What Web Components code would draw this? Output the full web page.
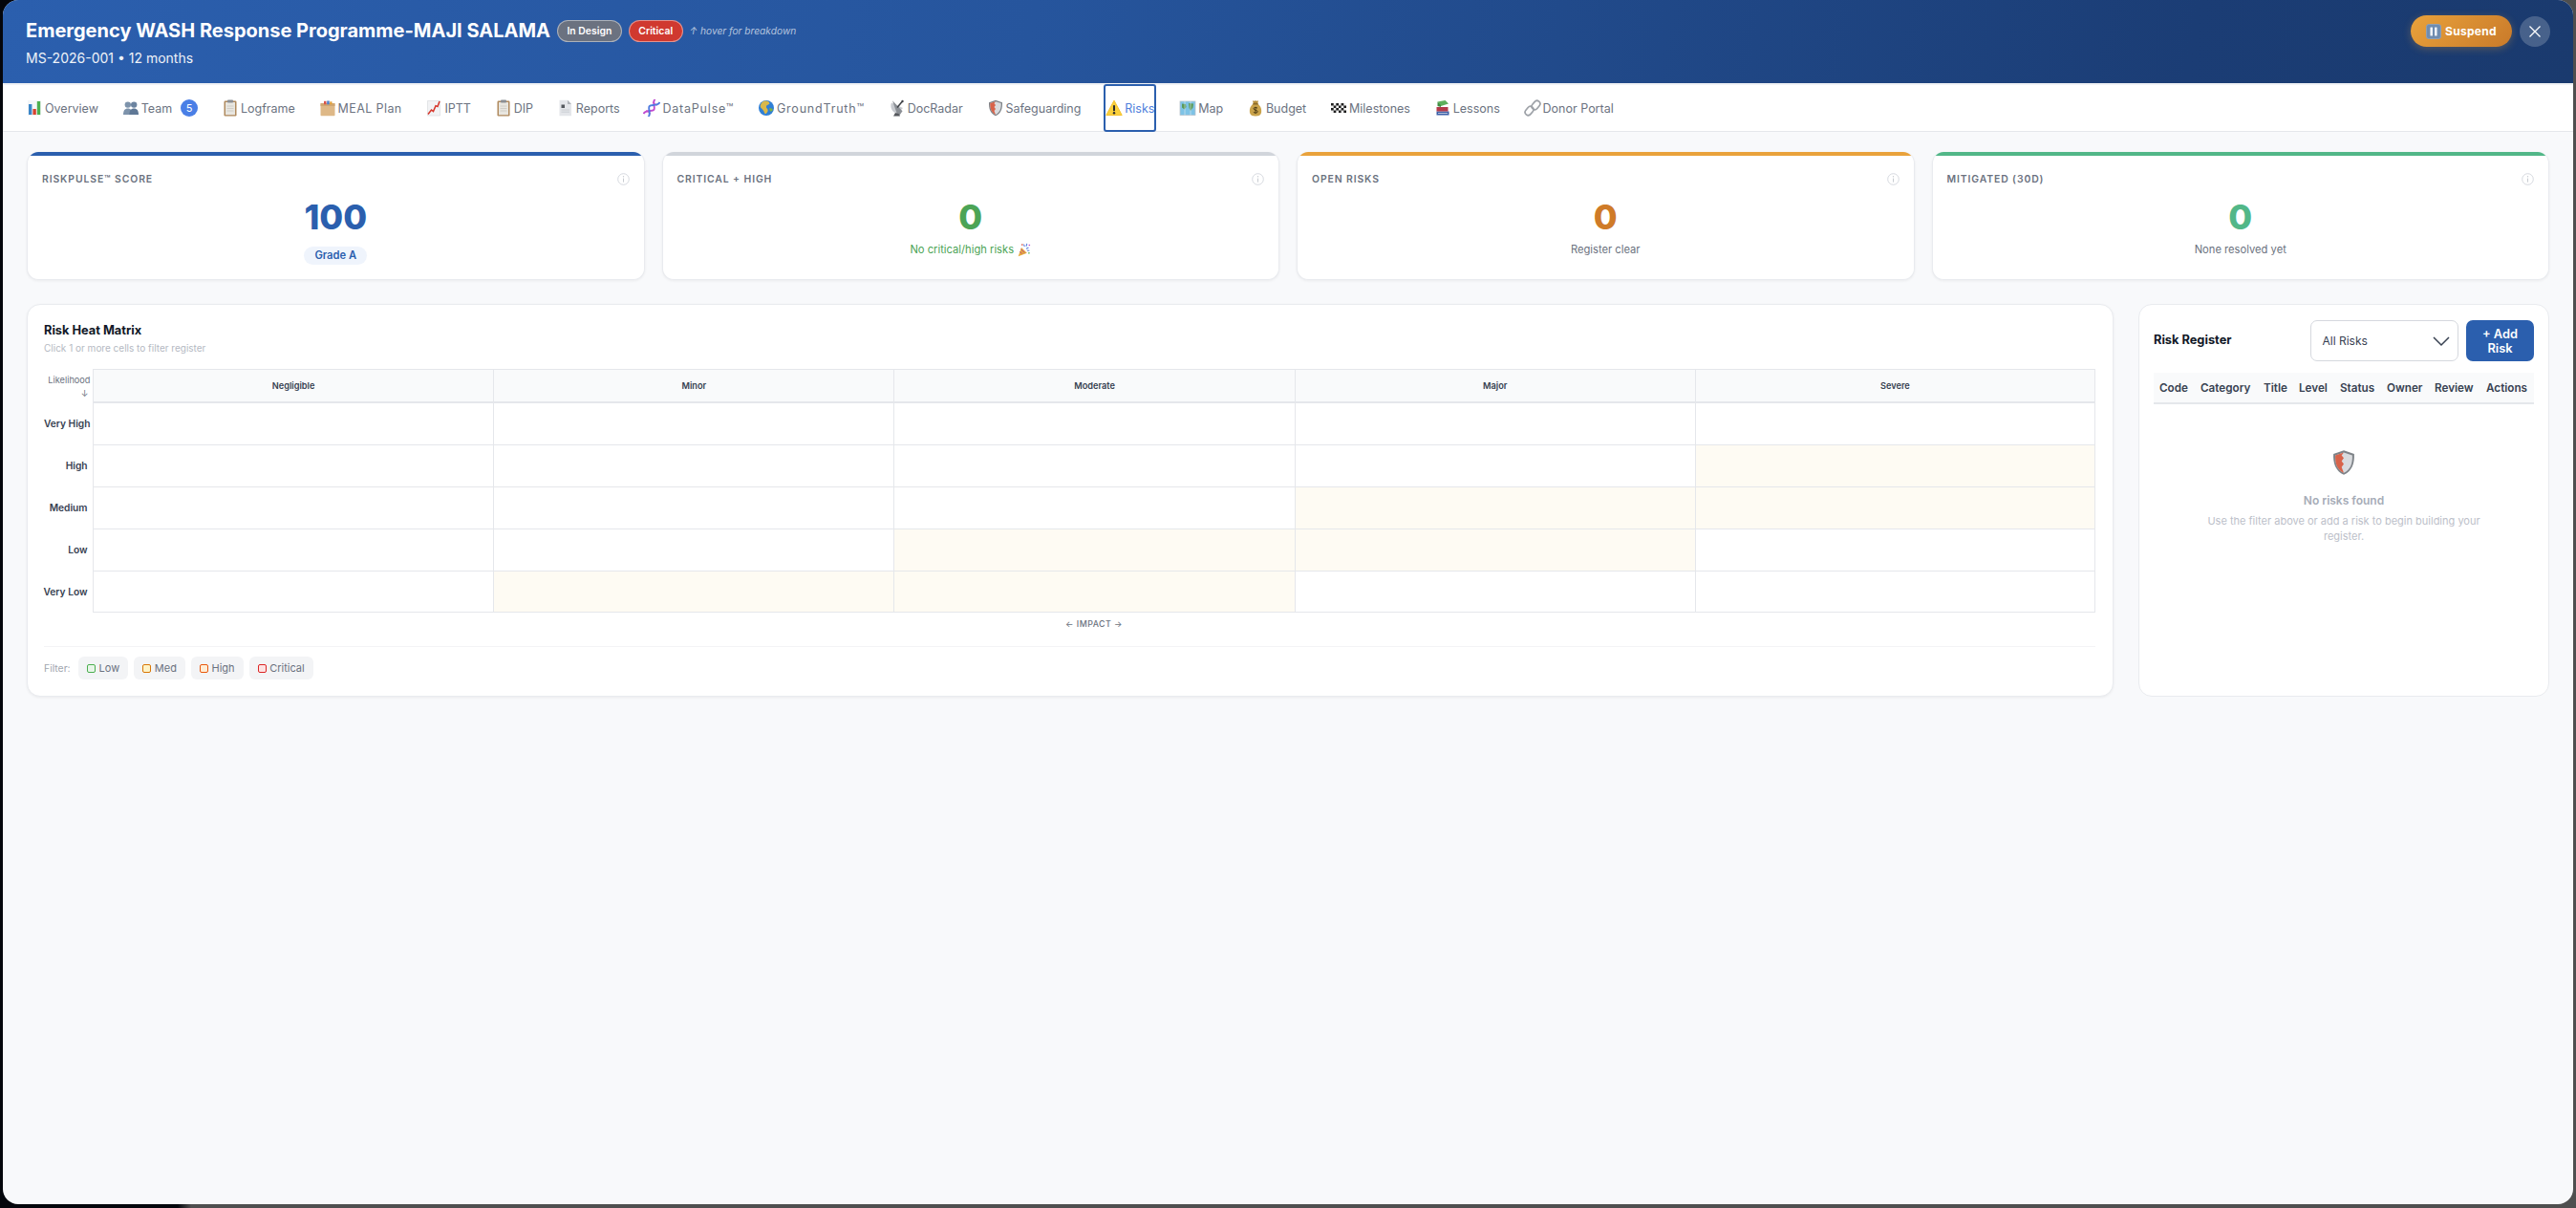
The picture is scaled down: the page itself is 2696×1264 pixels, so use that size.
<!DOCTYPE html>
<html lang="en">
<head>
<meta charset="utf-8">
<title>Risks</title>
<style>
  html,body{margin:0;height:100%}
  body{box-sizing:border-box;padding:0 3px 4px 3px;background:linear-gradient(90deg,#04060c 0,#04060c 186px,#4f4f4f 200px,#4f4f4f 100%);font-family:Inter,"Liberation Sans",sans-serif;overflow:hidden}
</style>
</head>
<body>
<ms-modal>
  <ms-header slot="header" title-text="Emergency WASH Response Programme-MAJI SALAMA" sub="MS-2026-001 • 12 months"></ms-header>
  <ms-tabs slot="tabs">
    <ms-tab icon="chart">Overview</ms-tab>
    <ms-tab icon="team" badge="5">Team</ms-tab>
    <ms-tab icon="clip">Logframe</ms-tab>
    <ms-tab icon="box" style="letter-spacing:.4px">MEAL Plan</ms-tab>
    <ms-tab icon="trend">IPTT</ms-tab>
    <ms-tab icon="clip">DIP</ms-tab>
    <ms-tab icon="doc">Reports</ms-tab>
    <ms-tab icon="dna" style="letter-spacing:.8px">DataPulse™</ms-tab>
    <ms-tab icon="globe" style="letter-spacing:.8px">GroundTruth™</ms-tab>
    <ms-tab icon="dish">DocRadar</ms-tab>
    <ms-tab icon="shield">Safeguarding</ms-tab>
    <ms-tab icon="warn" active>Risks</ms-tab>
    <ms-tab icon="map">Map</ms-tab>
    <ms-tab icon="bag">Budget</ms-tab>
    <ms-tab icon="flag">Milestones</ms-tab>
    <ms-tab icon="books">Lessons</ms-tab>
    <ms-tab icon="link">Donor Portal</ms-tab>
  </ms-tabs>
  <ms-kpi-row>
    <ms-kpi label="RISKPULSE™ SCORE" value="100" bar="#2b5fae" tone="#2b5fae" pill="Grade A"></ms-kpi>
    <ms-kpi label="CRITICAL + HIGH" value="0" bar="#d1d5db" tone="#4ca456" sub="No critical/high risks" subcolor="#4ca456" subicon="party"></ms-kpi>
    <ms-kpi label="OPEN RISKS" value="0" bar="#e9a23b" tone="#cf7b28" sub="Register clear"></ms-kpi>
    <ms-kpi label="MITIGATED (30D)" value="0" bar="#52b788" tone="#52b788" sub="None resolved yet"></ms-kpi>
  </ms-kpi-row>
  <ms-panels>
    <ms-matrix></ms-matrix>
    <ms-register slot="side"></ms-register>
  </ms-panels>
</ms-modal>

<script>
const ICONS = {
  chart:`<rect x="2" y="1" width="14" height="16" fill="#f4f6f8"/><rect x="3" y="5" width="3.4" height="11" fill="#3a86c8"/><rect x="7.4" y="10" width="3.4" height="6" fill="#d8432f"/><rect x="11.8" y="2" width="3.4" height="14" fill="#4caf50"/>`,
  team:`<circle cx="5.8" cy="5.6" r="3.2" fill="#7d93ab"/><circle cx="12.2" cy="5.6" r="3.2" fill="#6c84a0"/><path d="M1 16c0-4.5 1.6-6.6 4.8-6.6s4.800 2.100 4.800 6.600z" fill="#7d93ab"/><path d="M7.400 16c0-4.500 1.600-6.600 4.800-6.600S17 11.500 17 16z" fill="#5f7896"/>`,
  clip:`<rect x="2.500" y="1.500" width="13" height="16" rx="1.200" fill="#b08a5e"/><rect x="4" y="3" width="10" height="13.200" fill="#e8e6e0"/><rect x="6" y=".5" width="6" height="3" rx=".8" fill="#8c8f94"/><path d="M5.500 7h7M5.500 9.500h7M5.500 12h7" stroke="#c9c7c0" stroke-width=".8"/>`,
  box:`<path d="M1.500 4.500h15v12a.8.8 0 0 1-.8.8H2.300a.8.8 0 0 1-.8-.8z" fill="#deb887"/><rect x="1.500" y="4" width="15" height="3" fill="#cfa672"/><rect x="5" y="1.800" width="2.500" height="3.500" fill="#d8534a"/><rect x="8.200" y="1.500" width="2.500" height="3.800" fill="#4a7fc8"/><rect x="11.200" y="2.300" width="2.300" height="3" fill="#e2a13c"/>`,
  trend:`<path d="M2.500 1.500h13v15.500h-13z" fill="#f2f3f5" stroke="#d3d6da" stroke-width=".6"/><path d="M3 15.500l3.500-4.500 2 1.600 2.500-6 2 .8 2-5.400" fill="none" stroke="#d6352a" stroke-width="1.500"/>`,
  doc:`<path d="M2.500 .8h8.500l4 4.200v12.200H2.500z" fill="#e4e6ea"/><path d="M11 .8v4.200h4z" fill="#aeb2b8"/><rect x="4.500" y="5.500" width="3.500" height="3.500" fill="#55595f"/><path d="M4.500 11h8.500M4.500 13.200h8.500" stroke="#c3c6cb" stroke-width=".8"/>`,
  dna:`<g transform="rotate(38 9 9)" fill="none" stroke-width="1.900"><path d="M6 3.500h6M6 14.500h6" stroke="#e07ab8" stroke-width="1.200"/><path d="M6 -1C5 4 12 6 12 9s-7 5-6 10" stroke="#c04bd0"/><path d="M12 -1C13 4 6 6 6 9s7 5 6 10" stroke="#4f7be0"/></g>`,
  globe:`<circle cx="9" cy="9" r="8" fill="#2f7fd6"/><path d="M6 2c3-1 6 0 6.500 2.200-1 2-3 1-3.500 3.200-.5 2 2.500 2.500 1.500 5-1 2.500-3 3.500-3.500 1.500S5 10.500 3.500 9 2.800 4 6 2z" fill="#d9b84a"/><path d="M12 9.500c1.500-.5 3.500 0 3.800 1.500-.5 1.500-2.500 2-3 1z" fill="#7cb342"/>`,
  dish:`<path d="M3 3.500c-1.800 5 .5 10 6 11.500l6-6z" fill="#c8cbd0"/><path d="M4 1.200l10.500 11-3.500 5-2.500-3z" fill="#8b8f95"/><path d="M9 8.500l5-6" stroke="#3f4247" stroke-width="1.500"/><circle cx="14.500" cy="2" r="1.200" fill="#3f4247"/><path d="M7 14l-2 3.500h7l-1.500-2.500z" fill="#55585d"/>`,
  shield:`<path d="M9 .8l7 2.400c.3 6.500-1.500 11.500-7 14-5.500-2.500-7.300-7.500-7-14z" fill="#7e8388"/><path d="M9 2.200l5.700 1.900c.2 5.500-1.200 9.700-5.700 11.800-4.500-2.100-5.900-6.300-5.700-11.800z" fill="#d9dbde"/><path d="M3.300 4.100L9 2.200l-1.500 2L9 6 7.500 8 9 10l-1.500 2L9 15.900c-4.500-2.100-5.900-6.300-5.700-11.800z" fill="#d8634a"/>`,
  warn:`<path d="M9 1.200L17.200 16.500H.8z" fill="#fbd13d" stroke="#f5c22e" stroke-linejoin="round"/><rect x="8" y="6" width="2" height="6.300" rx=".8" fill="#2b2b2b"/><circle cx="9" cy="14.200" r="1.200" fill="#2b2b2b"/>`,
  map:`<rect x="1" y="2" width="16" height="14.500" fill="#7ec3e6"/><rect x="1" y="2" width="16" height="14.500" fill="none" stroke="#b9c4cc" stroke-width=".8"/><path d="M3 4.500l4 .5.500 3-2 2.500-2.500-2zM10 4l5 .5-.500 4-2.500 3.500-1.500-3z" fill="#5c9a58"/><path d="M6 2v14.500M12 2v14.500" stroke="#dfeaf1" stroke-width=".6"/>`,
  bag:`<path d="M6.500 4.800C3 7.500 2.500 11 3 14c.5 2.500 2.500 3.500 6 3.500s5.500-1 6-3.500c.5-3-.000-6.500-3.500-9.200z" fill="#c9a24a"/><path d="M6 1.200c1 .6 2 .6 3 0 1 .6 2 .6 3 0l-.800 3.600H6.800z" fill="#b58d3a"/><rect x="6.300" y="4.200" width="5.400" height="1.200" fill="#7a5b1e"/><path d="M11 9.200c-.8-1-4-1.200-4 .6 0 1.800 4.200 1 4.200 3 0 1.700-3.300 1.600-4.400.5M9 7.800v7" fill="none" stroke="#4b3a12" stroke-width="1"/>`,
  flag:`<rect x="1" y="4" width="16" height="10" fill="#f3f3f3"/><path d="M1 4h2.700v2.500H1zM6.300 4H9v2.500H6.300zM11.600 4h2.700v2.500h-2.700zM3.700 6.500h2.600V9H3.700zM9 6.500h2.600V9H9zM14.300 6.500H17V9h-2.700zM1 9h2.700v2.500H1zM6.300 9H9v2.500H6.300zM11.600 9h2.700v2.500h-2.700zM3.700 11.500h2.600V14H3.700zM9 11.500h2.600V14H9zM14.300 11.500H17V14h-2.700z" fill="#1f1f1f"/>`,
  books:`<rect x="2.500" y="12.500" width="13" height="4" fill="#3b5fa8"/><rect x="2.500" y="8" width="12" height="4.500" fill="#b33a4a"/><path d="M3.500 2.500l8-1.500 3.500 3.500-8 2.500z" fill="#5db05c"/><path d="M3.500 2.500V7l3.500 1V6z" fill="#3f8c42"/><path d="M4 14.500h10" stroke="#d8dde8" stroke-width=".8"/>`,
  link:`<g fill="none" stroke="#9ea2a8" stroke-width="1.700"><rect x="9.200" y="1" width="6.500" height="10" rx="3.250" transform="rotate(40 12.400 6)"/><rect x="2.300" y="7" width="6.500" height="10" rx="3.250" transform="rotate(40 5.600 12)"/></g>`,
  party:`<path d="M2 17l4-11 7 7z" fill="#e5a93c"/><path d="M4 11l3 3M5.500 8l4.500 4.500" stroke="#c0508a" stroke-width="1.200"/><path d="M9 2l1 3M13 1l-1 3.500M15 6l-3 1.500M16 10l-3-.5" stroke="#5a7fe0" stroke-width="1.300"/><circle cx="7" cy="2.500" r="1" fill="#d8432f"/><circle cx="16" cy="3" r="1" fill="#c04bd0"/><circle cx="15.500" cy="13" r="1" fill="#4caf50"/>`,
  pause:`<rect x=".5" y=".5" width="17" height="17" rx="3" fill="#6f8cb0"/><rect x=".5" y=".5" width="17" height="17" rx="3" fill="none" stroke="#8aa3c2"/><rect x="5" y="4" width="2.800" height="10" rx=".6" fill="#f3f6fa"/><rect x="10.200" y="4" width="2.800" height="10" rx=".6" fill="#f3f6fa"/>`
};
function def(name, css, html){
  customElements.define(name, class extends HTMLElement{
    constructor(){super();this.attachShadow({mode:'open'});}
    connectedCallback(){
      this.shadowRoot.innerHTML = `<style>${css}</style>` + (typeof html==='function'?html(this):html);
    }
  });
}
def('ms-icon', `:host{display:inline-block;line-height:0;flex:none}svg{display:block;width:100%;height:100%}`,
  el=>`<svg viewBox="0 0 18 18" xmlns="http://www.w3.org/2000/svg" aria-hidden="true">${ICONS[el.getAttribute('name')]||''}</svg>`);

def('ms-modal', `
  :host{display:flex;flex-direction:column;height:100%;width:2690px;background:#f8f9fb;border-radius:16px;overflow:hidden}
  .body{flex:1;display:flex;flex-direction:column;gap:25px;padding:21px 25px 0}
`, `<slot name="header"></slot><slot name="tabs"></slot><div class="body"><slot></slot></div>`);

def('ms-header', `
  :host{display:flex;justify-content:space-between;align-items:flex-start;height:87px;box-sizing:border-box;padding:16px 24px 0 24px;background:linear-gradient(100deg,#2b5fae 0%,#26559d 40%,#1b3d75 85%,#1a3a6e 100%);color:#fff;flex:none}
  .top{display:flex;align-items:center;height:32px}
  h1{margin:0;font-size:20px;font-weight:700;line-height:32px;white-space:nowrap}
  .badge{display:inline-flex;align-items:center;height:23px;box-sizing:border-box;border-radius:12px;border:1px solid rgba(255,255,255,.45);font-size:10.400px;font-weight:600;padding:0 9.500px;margin-left:7px}
  .red{background:#d0392f}
  .gray{background:#6b7280}
  .hint{font-size:10.200px;font-style:italic;color:rgba(255,255,255,.65);margin-left:7px;white-space:nowrap}
  .sub{font-size:14px;line-height:20px;margin-top:3px;opacity:.92}
  .right{display:flex;align-items:center;gap:8px}
  .sus{display:flex;align-items:center;gap:4px;height:33px;width:106px;box-sizing:border-box;padding-left:16px;border-radius:17px;background:linear-gradient(135deg,#e9a23b,#c97a2a);font-size:12px;font-weight:700;letter-spacing:.3px;box-shadow:0 2px 8px rgba(233,162,59,.3)}
  .sus ms-icon{width:16px;height:16px}
  .x{width:32px;height:32px;border-radius:50%;background:rgba(255,255,255,.2);display:flex;align-items:center;justify-content:center;margin-top:1px}
`, el=>`<div><div class="top"><h1>${el.getAttribute('title-text')}</h1><span class="badge gray">In Design</span><span class="badge red">Critical</span><span class="hint">↑ hover for breakdown</span></div><div class="sub">${el.getAttribute('sub')}</div></div>
<div class="right"><div class="sus"><ms-icon name="pause"></ms-icon><span>Suspend</span></div><div class="x"><svg width="14" height="14" viewBox="0 0 14 14"><path d="M1.500 1.500l11 11M12.500 1.500l-11 11" stroke="#fff" stroke-width="1.300" fill="none"/></svg></div></div>`);

def('ms-tabs', `
  :host{display:flex;flex:none;gap:24.800px;height:48px;padding:0 24px;background:#fff;border-top:2px solid #f0f2f5;border-bottom:1px solid #e5e7eb;align-items:stretch}
`, `<slot></slot>`);

def('ms-tab', `
  :host{display:flex;align-items:center;gap:2px;font-size:12.500px;color:#6b7280;white-space:nowrap;box-sizing:border-box;position:relative}
  :host([active]){color:#4f80dc;outline:2px solid #2b5fae;outline-offset:-1px;border-radius:2px;padding:0 1px}
  ms-icon{width:18px;height:18px}
  .b{display:inline-flex;width:18px;height:18px;border-radius:50%;background:#4a7fe6;color:#fff;font-size:11px;align-items:center;justify-content:center;margin-left:7px}
`, el=>`<ms-icon name="${el.getAttribute('icon')}"></ms-icon><span><slot></slot></span>${el.hasAttribute('badge')?`<span class="b">${el.getAttribute('badge')}</span>`:''}`);

def('ms-kpi-row', `:host{display:grid;grid-template-columns:repeat(4,1fr);gap:18px;flex:none}`, `<slot></slot>`);

def('ms-kpi', `
  :host{display:block;height:134px;box-sizing:border-box;background:#fff;border:1px solid #e9ebef;border-top:0;border-radius:12px;overflow:hidden;box-shadow:0 1px 3px rgba(0,0,0,.06);position:relative}
  .bar{height:4px}
  .in{padding:0 15px;display:flex;flex-direction:column;align-items:center}
  .head{align-self:stretch;display:flex;justify-content:space-between;align-items:center;height:16px;margin-top:16px}
  .lab{font-size:10.400px;font-weight:600;letter-spacing:.9px;color:#6b7280}
  .info{width:13px;height:13px;display:block}
  .val{font-size:36px;font-weight:800;line-height:44px;margin-top:10px}
  .pill{margin-top:9px;height:19px;line-height:19px;padding:0 11px;border-radius:10px;background:#eff4fc;color:#2b5fae;font-size:11.200px;font-weight:600}
  .sub{margin-top:3px;font-size:11.200px;line-height:18px;color:#6b7280;display:flex;align-items:center;gap:3px}
  .sub ms-icon{width:15px;height:15px}
`, el=>{
  const a=n=>el.getAttribute(n);
  return `<div class="bar" style="background:${a('bar')}"></div><div class="in"><div class="head"><span class="lab">${a('label')}</span><svg class="info" viewBox="0 0 13 13"><circle cx="6.500" cy="6.500" r="5.800" fill="none" stroke="#d1d5db" stroke-width=".9"/><path d="M6.500 5.600v4" stroke="#c6cad0" stroke-width="1"/><circle cx="6.500" cy="3.800" r=".7" fill="#c6cad0"/></svg></div>
  <div class="val" style="color:${a('tone')}">${a('value')}</div>
  ${a('pill')?`<div class="pill">${a('pill')}</div>`:`<div class="sub" style="${a('subcolor')?'color:'+a('subcolor'):''}"><span>${a('sub')}</span>${a('subicon')?`<ms-icon name="${a('subicon')}"></ms-icon>`:''}</div>`}</div>`;
});

def('ms-panels', `:host{display:flex;gap:26px;align-items:stretch;flex:none;height:411px}
  ::slotted(ms-matrix){flex:1;min-width:0}`, `<slot></slot><slot name="side"></slot>`);

def('ms-matrix', `
  :host{display:block;background:#fff;border:1px solid #e9ebef;border-radius:14px;box-shadow:0 1px 3px rgba(0,0,0,.06);padding:18px 18px 0 17px;box-sizing:border-box}
  h3{margin:0;font-size:12.800px;font-weight:700;color:#111827;line-height:18px}
  .s{font-size:10px;color:#b4b9c2;line-height:18px;margin-bottom:13px}
  .g{display:grid;grid-template-columns:51px repeat(5,1fr);grid-template-rows:35px repeat(5,44px)}
  .c{border-left:1px solid #e5e7eb;border-top:1px solid #e5e7eb;box-sizing:border-box}
  .c.e{border-right:1px solid #e5e7eb}.c.b{border-bottom:1px solid #e5e7eb}
  .c.hl{background:#fefbf3}
  .h{background:#f9fafb;display:flex;align-items:center;justify-content:center;font-size:9.200px;font-weight:600;color:#374151;border-bottom:1px solid #e5e7eb}
  .lk{font-size:9.200px;color:#6b7280;text-align:right;padding-right:2.500px;line-height:13.500px;padding-top:5px}
  .lk i{font-style:normal;display:block;padding-right:2px}
  .r{display:flex;align-items:center;justify-content:flex-end;font-size:10.200px;font-weight:600;color:#374151;padding-right:5.500px;white-space:nowrap}
  .r.over{justify-content:flex-start;padding-right:0}
  .imp{text-align:center;margin-left:51px;font-size:8.800px;font-weight:500;letter-spacing:.5px;color:#6b7280;line-height:12px;margin-top:6px}
  .f{display:flex;align-items:center;gap:6px;margin-top:17px;padding-top:10px;border-top:1px solid #f3f4f6}
  .f>span{font-size:10.400px;color:#a0a5ae;margin-right:3px;width:27px;white-space:nowrap}
`, ()=>{
  const cols=['Negligible','Minor','Moderate','Major','Severe'], rows=['Very High','High','Medium','Low','Very Low'];
  const hl={'1-4':1,'2-3':1,'2-4':1,'3-2':1,'3-3':1,'4-1':1,'4-2':1};
  let g=`<div class="lk">Likelihood<i>↓</i></div>`;
  cols.forEach((c,i)=>g+=`<div class="c h${i==4?' e':''}">${c}</div>`);
  rows.forEach((r,y)=>{
    g+=`<div class="r${r=='Very High'?' over':''}">${r}</div>`;
    cols.forEach((c,x)=>g+=`<div class="c${x==4?' e':''}${y==4?' b':''}${hl[y+'-'+x]?' hl':''}"></div>`);
  });
  return `<h3>Risk Heat Matrix</h3><div class="s">Click 1 or more cells to filter register</div><div class="g">${g}</div><div class="imp">← IMPACT →</div>
  <div class="f"><span>Filter:</span><ms-chip label="Low" bd="#4caf50" bg="#e8f5e9"></ms-chip><ms-chip label="Med" bd="#d97706" bg="#fef3c7"></ms-chip><ms-chip label="High" bd="#ea580c" bg="#ffedd5"></ms-chip><ms-chip label="Critical" bd="#dc2626" bg="#fee2e2"></ms-chip></div>`;
});

def('ms-chip', `
  :host{display:inline-flex;align-items:center;gap:3.600px;height:24px;padding:0 9px;border-radius:6px;background:#f3f4f6;font-size:11px;color:#6b7280}
  i{display:block;width:7px;height:7px;border-radius:2px;border:1.200px solid;box-sizing:content-box}
`, el=>`<i style="border-color:${el.getAttribute('bd')};background:${el.getAttribute('bg')}"></i><span>${el.getAttribute('label')}</span>`);

def('ms-register', `
  :host{display:block;flex:none;width:430px;box-sizing:border-box;background:#fff;border:1px solid #e9ebef;border-radius:14px;padding:16px 15px 0}
  .top{display:flex;align-items:center;height:43px}
  h3{margin:0;font-size:12.800px;font-weight:700;color:#111827;flex:1;white-space:nowrap;position:relative;top:-1px}
  .sel{width:155px;height:43px;box-sizing:border-box;border:1.500px solid #d5d8de;border-radius:7px;display:flex;align-items:center;justify-content:space-between;padding:0 7px 0 11.500px;font-size:12px;color:#374151;margin-right:8px}
  .add{width:71px;height:43px;border-radius:7px;background:#2b5fae;color:#fff;font-size:12.800px;font-weight:600;line-height:15px;text-align:center;display:flex;align-items:center;justify-content:center}
  table{border-collapse:collapse;table-layout:fixed;width:398px;margin-top:12px;background:#f9fafb;border-bottom:2px solid #e5e7eb}
  th{font-size:11.700px;font-weight:600;color:#374151;height:32px;padding:1px 0 0;text-align:left;white-space:nowrap;box-sizing:border-box}
  .empty{display:flex;flex-direction:column;align-items:center;padding-top:47px;text-align:center}
  .empty ms-icon{width:28px;height:28px}
  .t{font-size:12px;font-weight:600;color:#a6acb7;margin-top:17px;line-height:18px}
  .d{font-size:11px;line-height:16px;color:#bcc0c9;margin-top:4px;width:300px}
`, ()=>{
  const ws=[43,66,37,43,49,50,54,56];
  const hs=['Code','Category','Title','Level','Status','Owner','Review','Actions'];
  return `<div class="top"><h3>Risk Register</h3><div class="sel"><span>All Risks</span><svg width="20" height="12" viewBox="0 0 20 12"><path d="M2 2l8 8 8-8" fill="none" stroke="#374151" stroke-width="1.500"/></svg></div><div class="add">+ Add<br>Risk</div></div>
  <table><colgroup>${ws.map(w=>`<col style="width:${w}px">`).join('')}</colgroup><tr>${hs.map(h=>`<th style="padding-left:6px">${h}</th>`).join('')}</tr></table>
  <div class="empty"><ms-icon name="shield"></ms-icon><div class="t">No risks found</div><div class="d">Use the filter above or add a risk to begin building your register.</div></div>`;
});
</script>
</body>
</html>
